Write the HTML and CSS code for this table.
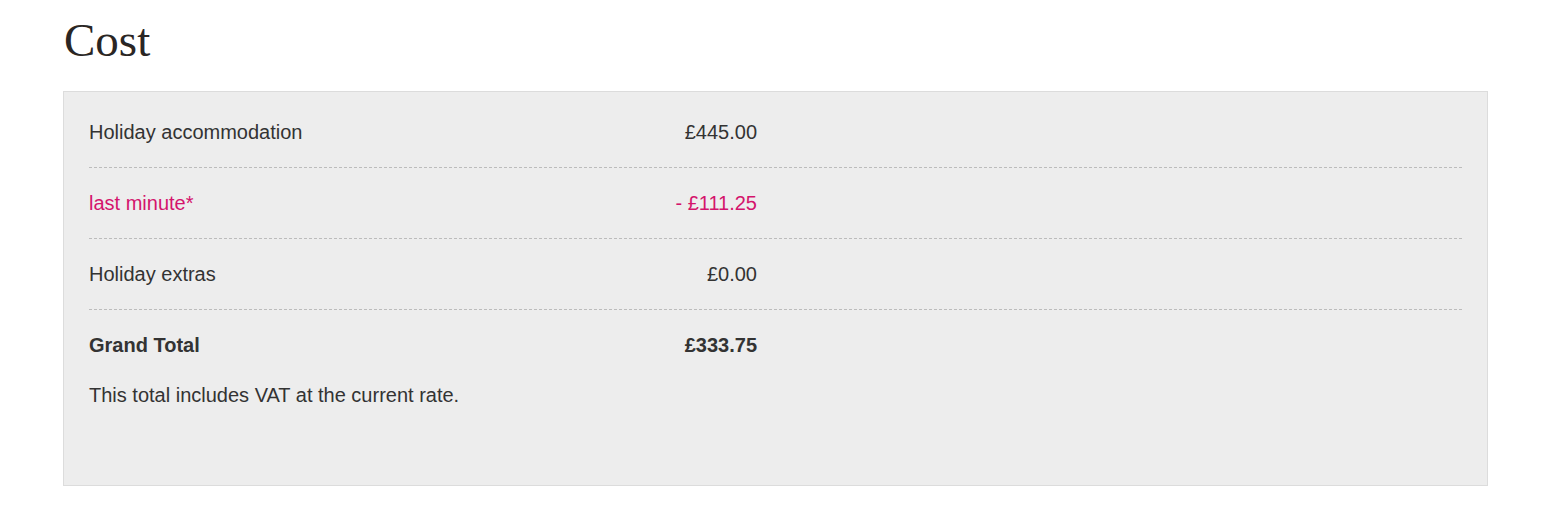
FILE: index.html
```html
<!DOCTYPE html>
<html lang="en">
<head>
    <meta charset="UTF-8">
    <meta name="viewport" content="width=device-width, initial-scale=1.0">
    <title>Cost</title>
    <link rel="stylesheet" href="styles.css">
</head>
<body>
    <div class="page">
        <h2 class="title">Cost</h2>
        <div class="cost-box">
            <div class="cost-row">
                <span class="label">Holiday accommodation</span>
                <span class="amount">£445.00</span>
            </div>
            <div class="cost-row discount">
                <span class="label">last minute*</span>
                <span class="amount">- £111.25</span>
            </div>
            <div class="cost-row">
                <span class="label">Holiday extras</span>
                <span class="amount">£0.00</span>
            </div>
            <div class="cost-row total">
                <span class="label">Grand Total</span>
                <span class="amount">£333.75</span>
            </div>
            <p class="note">This total includes VAT at the current rate.</p>
        </div>
    </div>
</body>
</html>
```

FILE: styles.css
```css
body {
    margin: 0;
    background-color: #fff;
    color: #333;
    font-family: "Liberation Sans", Arial, sans-serif;
}

.page {
    width: 1425px;
    margin-left: 63px;
    padding-top: 13px;
}

.title {
    margin: 0 0 24px 1px;
    font-family: "Liberation Serif", "Times New Roman", serif;
    font-size: 47px;
    font-weight: normal;
    line-height: 54px;
    color: #2a2624;
}

.cost-box {
    background-color: #ededed;
    border: 1px solid #dcdcdc;
    padding: 5px 25px 78px;
}

.cost-row {
    display: flex;
    justify-content: space-between;
    width: 668px;
    padding: 24px 0;
    font-size: 20px;
    line-height: 23px;
    position: relative;
}

.cost-row + .cost-row::before {
    content: "";
    position: absolute;
    top: -1px;
    left: 0;
    width: 1373px;
    border-top: 1px dashed #bcbcbc;
}

.discount {
    color: #d4146c;
}

.total {
    font-weight: bold;
    padding-bottom: 27px;
}

.note {
    margin: 0;
    font-size: 20px;
    line-height: 23px;
}
```
